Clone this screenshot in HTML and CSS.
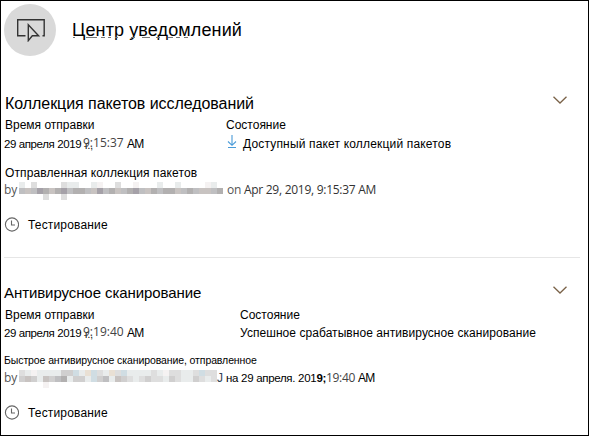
FILE: index.html
```
<!DOCTYPE html>
<html lang="ru">
<head>
<meta charset="utf-8">
<title>Центр уведомлений</title>
<link rel="stylesheet" href="styles.css">
</head>
<body>
<main class="panel">
  <header class="header">
    <span class="avatar"><svg width="30" height="24" viewBox="0 0 30 24" fill="none" stroke="#333" stroke-width="1.4"><path d="M10.5 17.7H2.7V1.7H29.2V17.7H27.5"/><path d="M13.3 6.8V22.6L17.3 17.7H23.6Z"/></svg></span>
    <h1 class="title">Центр уведомлений<svg class="title-marks" width="120" height="1" viewBox="0 0 120 1"><path d="M1 .5H3M14 .5H25M29 .5H33M36 .5H39M43 .5H46M59 .5H63M70 .5H78M84 .5H88M96 .5H101M104 .5H108M112 .5H116"/></svg></h1>
  </header>

  <section class="entry">
    <div class="entry-head"><h2 class="name name-a">Коллекция пакетов исследований</h2><svg class="chevron" width="14" height="8" viewBox="0 0 14 8"><path d="M.5 .7L7 7L13.5 .7"/></svg></div>
    <div class="columns">
      <div class="sent"><div class="label label-sent">Время отправки</div><div class="value"><span class="date">29 апреля 2019</span><span class="suffix">г.,</span><span class="time">9:15:37</span><span class="ampm">AM</span></div></div>
      <div class="state"><div class="label label-state">Состояние</div><div class="value"><svg class="download" width="10" height="14" viewBox="0 0 10 14"><path d="M5 0V10M1 6.5L5 10.3L9 6.5M1 12.5H9"/></svg><span class="state-a">Доступный пакет коллекций пакетов</span></div></div>
    </div>
    <div class="note note-a">Отправленная коллекция пакетов</div>
    <div class="author"><span class="by">by</span><svg class="mosaic" id="mosaic-a" width="204" height="18"></svg><span class="when">on <span class="when-date">Apr 29, 2019, 9:15:37 AM</span></span></div>
    <div class="task"><svg class="clock" width="15" height="15" viewBox="0 0 15 15"><circle cx="8" cy="7.5" r="6.6"/><path d="M7.5 3.5V8H11"/></svg><span>Тестирование</span></div>
  </section>

  <section class="entry entry-second">
    <div class="entry-head"><h2 class="name name-b">Антивирусное сканирование</h2><svg class="chevron" width="14" height="8" viewBox="0 0 14 8"><path d="M.5 .7L7 7L13.5 .7"/></svg></div>
    <div class="columns">
      <div class="sent"><div class="label label-sent">Время отправки</div><div class="value"><span class="date">29 апреля 2019</span><span class="suffix">г.,</span><span class="time">9:19:40</span><span class="ampm">AM</span></div></div>
      <div class="state"><div class="label label-state">Состояние</div><div class="value"><span class="state-b">Успешное срабатывное антивирусное сканирование</span></div></div>
    </div>
    <div class="note note-b">Быстрое антивирусное сканирование, отправленное</div>
    <div class="author author-b"><span class="by">by</span><svg class="mosaic" id="mosaic-b" width="198" height="18"></svg><span class="when-b"><span class="initial">J</span><span class="date-b">на 29 апреля. 201<b>9;</b></span><span class="time-b">19:40</span><span class="ampm-b">AM</span></span></div>
    <div class="task"><svg class="clock" width="15" height="15" viewBox="0 0 15 15"><circle cx="8" cy="7.5" r="6.6"/><path d="M7.5 3.5V8H11"/></svg><span>Тестирование</span></div>
  </section>
</main>
<script src="mosaic.js"></script>
</body>
</html>
```
FILE: styles.css
```
* { box-sizing: border-box; }
body { margin: 0; background: #fff; color: #000; font: 12px "Liberation Sans", sans-serif; }
h1, h2 { margin: 0; font-weight: 400; }
svg { display: block; flex: none; }
.panel { width: 589px; height: 436px; border: 1px solid #000; overflow: hidden; padding: 3px 8px 0 3px; white-space: nowrap; }
.header { display: flex; height: 52px; gap: 16px; }
.avatar { width: 52px; height: 52px; border-radius: 50%; background: #d9d9d9; display: flex; align-items: center; justify-content: center; }
.title { position: relative; font-size: 18px; line-height: 52px; letter-spacing: .12px; }
.title-marks { position: absolute; left: 0; top: 33px; stroke: #777; }
.entry { height: 202px; padding-top: 37px; border-bottom: 1px solid #e6e6e6; }
.entry-second { border: 0; padding-top: 24px; }
.entry-head { display: flex; justify-content: space-between; height: 23px; padding: 0 13px 0 0; }
.name { font-size: 16px; line-height: 22px; }
.name-a { padding-left: 1px; letter-spacing: -.06px; }
.name-b { font-size: 15px; letter-spacing: -.08px; }
.chevron { margin-top: 3px; fill: none; stroke: #7a6248; stroke-width: 1.3; }
.entry-second .chevron { margin-top: 4px; }
.columns { display: flex; }
.sent { width: 222px; }
.label { height: 19px; line-height: 19px; padding-left: 1px; }
.entry-second .label { line-height: 21px; }
.value { display: flex; height: 19px; line-height: 19px; }
.label-state { padding-left: 0; }
.entry-second .state { padding-left: 14px; }
.date { width: 78px; font-size: 11.5px; letter-spacing: -.4px; }
.suffix { font-size: 10px; width: 8px; padding-left: 3px; line-height: 21px; }
.time { font-family: "Open Sans", sans-serif; color: #444; margin-left: -7px; width: 44px; line-height: 16px; }
.ampm { letter-spacing: -.8px; }
.download { margin: 0 6px 0 1px; fill: none; stroke: #4a9bd8; stroke-width: 1.1; }
.state-a { letter-spacing: .17px; }
.state-b { letter-spacing: .06px; }
.note { margin-top: 10px; height: 18px; line-height: 18px; }
.note-a { padding-left: 1px; letter-spacing: .12px; }
.note-b { font-size: 10.5px; letter-spacing: -.1px; height: 18px; margin-top: 8px; }
.author { display: flex; height: 16px; line-height: 16px; font-family: "Open Sans", sans-serif; color: #555; }
.author-b { height: 15px; margin-top: 1px; }
.by { width: 15px; font-size: 12px; }
.when { margin-left: 4px; letter-spacing: -.27px; }
.when-date { color: #333; }
.when-b { display: flex; color: #000; font-family: "Liberation Sans", sans-serif; }
.initial { width: 9px; color: #345; }
.date-b { width: 100px; font-size: 11.5px; letter-spacing: -.3px; }
.time-b { font-family: "Open Sans", sans-serif; color: #444; width: 32px; letter-spacing: -.3px; }
.ampm-b { letter-spacing: -.8px; }
.task { display: flex; align-items: center; height: 18px; margin-top: 18px; gap: 9px; letter-spacing: .16px; }
.entry-second .task { margin-top: 19px; }
.clock { margin-bottom: 2px; fill: none; stroke: #666; stroke-width: 1.1; }
```
FILE: mosaic.js
```
// Paint the pixelated account names: one row of gray levels per line, 6px cells.
const levels = { a: '#f5f2f2', b: '#e9ecec', c: '#dedede', d: '#d0cfcf', e: '#bfbfc1', f: '#b2b0b0', g: '#a5a1a8', h: '#c8c3c1', i: '#d0dde3', j: '#e9e0d4' };
const rows = {
  'mosaic-a': ['b.c....cbb..ba..c..a...b..b....ab.', 'ehegfhfgeffehgefhefgehfeffhefehhef', '....c..c..........................'],
  'mosaic-b': ['cbabbbbddibjicbjcibbbbcbaccbbcicc', 'dhdbhdefbddbidebhdcbcdccbdcbbdcbc', '....a............................']
};
for (const id in rows) {
  const svg = document.getElementById(id);
  rows[id].forEach((row, y) => [...row].forEach((key, x) => {
    if (key === '.') return;
    const cell = document.createElementNS('http://www.w3.org/2000/svg', 'rect');
    cell.setAttribute('x', x * 6);
    cell.setAttribute('y', y * 6);
    cell.setAttribute('width', 6);
    cell.setAttribute('height', 6);
    cell.setAttribute('fill', levels[key]);
    svg.append(cell);
  }));
}
```
